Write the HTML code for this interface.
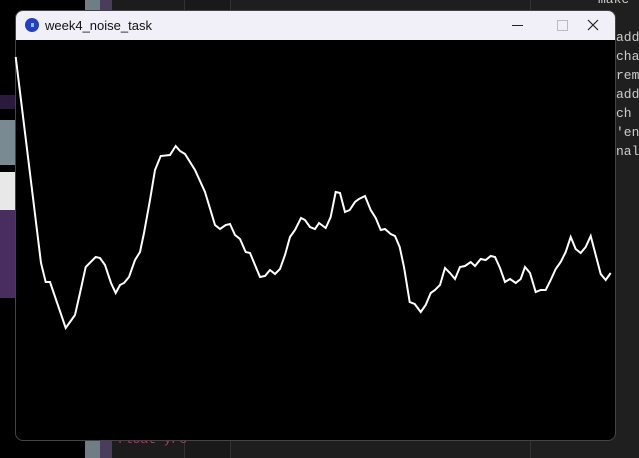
<!DOCTYPE html>
<html><head><meta charset="utf-8"><style>
html,body{margin:0;padding:0;width:639px;height:458px;overflow:hidden;background:#000;font-family:"Liberation Sans",sans-serif}
.abs{position:absolute}
.code{font-family:"Liberation Mono",monospace;font-size:13px;color:#ccc;white-space:nowrap}
</style></head><body>
<div class="abs" style="left:0;top:0;width:639px;height:458px;background:#000"></div>
<div class="abs" style="left:85px;top:0;width:15px;height:458px;background:#6f7d85"></div>
<div class="abs" style="left:100px;top:0;width:12px;height:458px;background:#4a3d5c"></div>
<div class="abs" style="left:112px;top:0;width:72px;height:458px;background:#1c1c1c"></div>
<div class="abs" style="left:184px;top:0;width:46px;height:458px;background:#191919;border-left:1px solid #333"></div>
<div class="abs" style="left:230px;top:0;width:300px;height:458px;background:#1e1e1e;border-left:1px solid #333"></div>
<div class="abs" style="left:530px;top:0;width:109px;height:458px;background:#1f1f1f;border-left:1px solid #333"></div>
<div class="abs" style="left:0;top:95px;width:15px;height:14px;background:#2b1a3d"></div>
<div class="abs" style="left:0;top:120px;width:15px;height:45px;background:#7a8a92"></div>
<div class="abs" style="left:0;top:172px;width:15px;height:38px;background:#e8e8e8"></div>
<div class="abs" style="left:0;top:210px;width:15px;height:88px;background:#4a2d60"></div>
<div class="abs code" style="left:616px;top:28px;line-height:19px;width:30px;overflow:hidden">adde<br>char<br>remo<br>adde<br>ch i<br>'end<br>nal</div>
<div class="abs code" style="left:598px;top:-8px">make</div>
<div class="abs code" style="left:117px;top:432px;color:#c0306a">float yPo</div>
<div class="abs" style="left:15px;top:10px;width:601px;height:431px;box-sizing:border-box;border:1px solid #444;border-radius:8px;overflow:hidden;background:#000">
 <div style="height:29px;background:#f1eff7;position:relative">
  <div class="abs" style="left:9px;top:7px;width:14px;height:14px;border-radius:50%;background:#2340c0"></div>
  <div class="abs" style="left:15px;top:12px;width:3px;height:4px;background:#9bb"></div>
  <div class="abs" style="left:29px;top:7px;font-size:13px;color:#111">week4_noise_task</div>
  <div class="abs" style="left:496px;top:14px;width:11px;height:1px;background:#222"></div>
  <div class="abs" style="left:541px;top:9px;width:9px;height:9px;border:1px solid #bbb"></div>
  <svg class="abs" style="left:571px;top:8px" width="12" height="12"><path d="M1 1L11 11M11 1L1 11" stroke="#222" stroke-width="1.2"/></svg>
 </div>
</div>
<svg class="abs" style="left:0;top:0" width="639" height="458"><polyline fill="none" stroke="#fff" stroke-width="2" stroke-linejoin="miter" points="15.7,57 41,263 45.7,282 50,282 65.7,328 70,322 75,315 80,293 85.7,267 95.7,257 100,258 105,265 111,283 115.7,293 120,285 124,283 129,277 135,260 140,252 144,233 150,200 155,170 160.7,156 170,155 175.7,146 180,151 185,154 195,170 205,192 215,225 220,229 225.7,225 230,224 235,235 240,239 245.7,252 250,253 260,277 265,276 270,270 275,274 280,269 285,255 290,237 295,230 301,218 305,220 310,227 315,229 319,223 325.7,228 330.7,217 335.7,192 340,193 345,212 349.7,210 355,202 359,199 365,196 370.7,210 375.7,218 380.7,230 385,229 390.7,234 395,236 399.7,247 404,267 409.7,302 414.7,304 420.7,312 425.7,305 430.7,293 435,290 440,285 445,268 450,273 455,279 460,267 465,266 470.7,262 475,266 480.7,259 485.7,260 490.7,256 495,257 500,268 505,282 510,279 515.7,283 520.7,279 525,267 530,273 535.7,292 540.7,290 545.7,290 550.7,280 555.7,269 560.7,262 565.7,252 570.7,237 575.7,249 580.7,253 585.7,247 590.7,236 595.7,255 600.7,274 605.7,280 610.7,273"/></svg>
</body></html>
